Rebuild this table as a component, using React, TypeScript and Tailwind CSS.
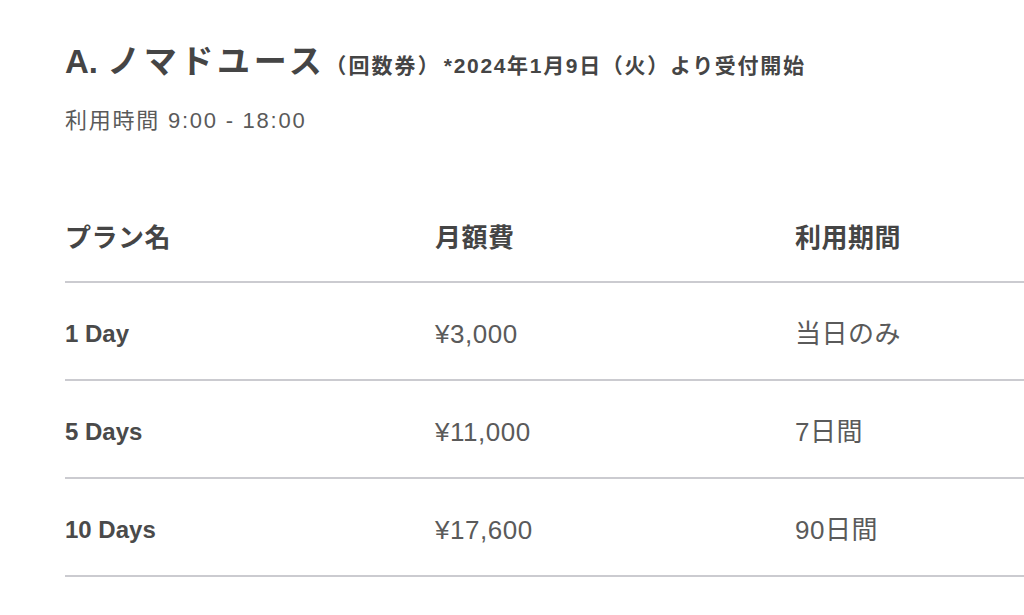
import React from 'react';

const rows = [
  { name: '1 Day', price: '¥3,000', term: '当日のみ' },
  { name: '5 Days', price: '¥11,000', term: '7日間' },
  { name: '10 Days', price: '¥17,600', term: '90日間' },
];

export default function App() {
  return (
    <div className="w-[1024px] h-[615px] overflow-hidden bg-white font-['Liberation_Sans','Noto_Sans_CJK_JP',sans-serif]">
      <div className="pl-[65px] pt-[42px]">
        {/* Title */}
        <h2 className="text-[33px] leading-[40px] font-bold text-[#454545] whitespace-nowrap">
          A. <span className="tracking-[0.11em]">ノマドユース</span>
          <span className="text-[21px] tracking-[0.1em]">（回数券）</span>
          <span className="ml-[3px] text-[21px] tracking-[0.08em]">*2024年1月9日（火）より受付開始</span>
        </h2>
        <p className="mt-[20px] text-[22px] leading-[30px] tracking-[0.08em] text-[#5a5a5a]">
          利用時間 9:00 - 18:00
        </p>

        {/* Plan table */}
        <div className="mt-[49px] w-[1100px]">
          <div className="grid grid-cols-[370px_360px_1fr] h-[98px] pt-[10px] items-center border-b-2 border-[#cbcbd0] text-[26px] leading-[34px] font-bold tracking-[0.02em] text-[#454545]">
            <div>プラン名</div>
            <div>月額費</div>
            <div>利用期間</div>
          </div>
          {rows.map((r) => (
            <div
              key={r.name}
              className="grid grid-cols-[370px_360px_1fr] h-[98px] pt-[5px] items-center border-b-2 border-[#cbcbd0]"
            >
              <div className="text-[24px] leading-[32px] font-bold text-[#4a4a4a]">{r.name}</div>
              <div className="text-[26px] leading-[32px] tracking-[0.02em] text-[#5a5a5a]">{r.price}</div>
              <div className="text-[26px] leading-[32px] tracking-[0.02em] text-[#5a5a5a]">{r.term}</div>
            </div>
          ))}
        </div>
      </div>
    </div>
  );
}
